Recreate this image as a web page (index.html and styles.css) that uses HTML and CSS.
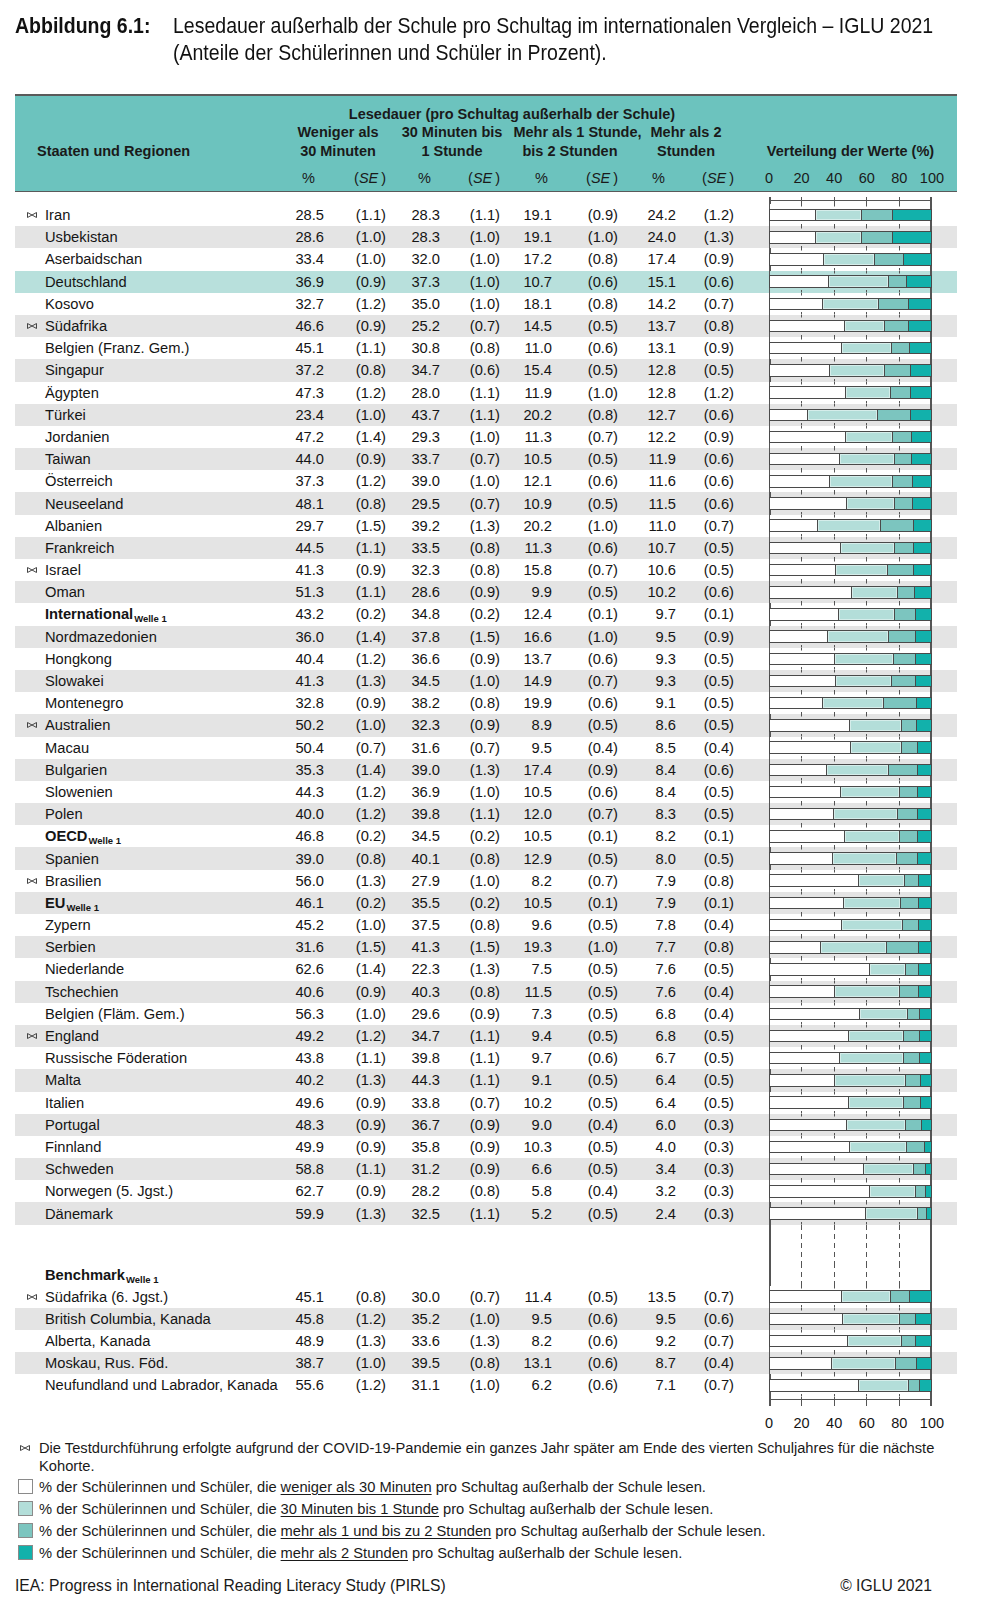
FILE: index.html
```html
<!DOCTYPE html>
<html lang="de">
<head>
<meta charset="utf-8">
<title>Abbildung 6.1</title>
<link rel="stylesheet" href="styles.css">
</head>
<body>
<div class="page">
  <div class="title">
    <div class="label"><span>Abbildung 6.1:</span></div>
    <div class="text"><span>Lesedauer außerhalb der Schule pro Schultag im internationalen Vergleich – IGLU 2021</span><span>(Anteile der Schülerinnen und Schüler in Prozent).</span></div>
  </div>

  <div class="head grid">
    <div class="h-states">Staaten und Regionen</div>
    <div class="h-title">Lesedauer (pro Schultag außerhalb der Schule)</div>
    <div class="h-grp g1"><span>Weniger als</span><span>30 Minuten</span></div>
    <div class="h-grp g2"><span>30 Minuten bis</span><span>1 Stunde</span></div>
    <div class="h-grp g3"><span class="shift">Mehr als 1 Stunde,</span><span>bis 2 Stunden</span></div>
    <div class="h-grp g4"><span>Mehr als 2</span><span>Stunden</span></div>
    <div class="h-dist">Verteilung der Werte (%)</div>
    <div class="h-pct c2">%</div><div class="h-se c3">(<i>SE</i>&#8201;)</div>
    <div class="h-pct c4">%</div><div class="h-se c5">(<i>SE</i>&#8201;)</div>
    <div class="h-pct c6">%</div><div class="h-se c7">(<i>SE</i>&#8201;)</div>
    <div class="h-pct c8">%</div><div class="h-se c9">(<i>SE</i>&#8201;)</div>
    <div class="h-axis"><span>0</span><span>20</span><span>40</span><span>60</span><span>80</span><span>100</span></div>
  </div>

  <div class="grid axis-top"><div class="chart"></div></div>

  <div class="row grid"><div class="name"><svg class="bt" viewBox="0 0 10 6"><path d="M.5.5 5 3 .5 5.5ZM9.5.5 5 3 9.5 5.5Z"/></svg>Iran</div><span>28.5</span><span>(1.1)</span><span>28.3</span><span>(1.1)</span><span>19.1</span><span>(0.9)</span><span>24.2</span><span>(1.2)</span><div class="chart"><div class="bar"><i class="s1" style="flex:28.5"></i><i class="s2" style="flex:28.3"></i><i class="s3" style="flex:19.1"></i><i class="s4" style="flex:24.2"></i></div></div></div>
  <div class="row grid alt"><div class="name">Usbekistan</div><span>28.6</span><span>(1.0)</span><span>28.3</span><span>(1.0)</span><span>19.1</span><span>(1.0)</span><span>24.0</span><span>(1.3)</span><div class="chart"><div class="bar"><i class="s1" style="flex:28.6"></i><i class="s2" style="flex:28.3"></i><i class="s3" style="flex:19.1"></i><i class="s4" style="flex:24.0"></i></div></div></div>
  <div class="row grid"><div class="name">Aserbaidschan</div><span>33.4</span><span>(1.0)</span><span>32.0</span><span>(1.0)</span><span>17.2</span><span>(0.8)</span><span>17.4</span><span>(0.9)</span><div class="chart"><div class="bar"><i class="s1" style="flex:33.4"></i><i class="s2" style="flex:32.0"></i><i class="s3" style="flex:17.2"></i><i class="s4" style="flex:17.4"></i></div></div></div>
  <div class="row grid de"><div class="name">Deutschland</div><span>36.9</span><span>(0.9)</span><span>37.3</span><span>(1.0)</span><span>10.7</span><span>(0.6)</span><span>15.1</span><span>(0.6)</span><div class="chart"><div class="bar"><i class="s1" style="flex:36.9"></i><i class="s2" style="flex:37.3"></i><i class="s3" style="flex:10.7"></i><i class="s4" style="flex:15.1"></i></div></div></div>
  <div class="row grid"><div class="name">Kosovo</div><span>32.7</span><span>(1.2)</span><span>35.0</span><span>(1.0)</span><span>18.1</span><span>(0.8)</span><span>14.2</span><span>(0.7)</span><div class="chart"><div class="bar"><i class="s1" style="flex:32.7"></i><i class="s2" style="flex:35.0"></i><i class="s3" style="flex:18.1"></i><i class="s4" style="flex:14.2"></i></div></div></div>
  <div class="row grid alt"><div class="name"><svg class="bt" viewBox="0 0 10 6"><path d="M.5.5 5 3 .5 5.5ZM9.5.5 5 3 9.5 5.5Z"/></svg>Südafrika</div><span>46.6</span><span>(0.9)</span><span>25.2</span><span>(0.7)</span><span>14.5</span><span>(0.5)</span><span>13.7</span><span>(0.8)</span><div class="chart"><div class="bar"><i class="s1" style="flex:46.6"></i><i class="s2" style="flex:25.2"></i><i class="s3" style="flex:14.5"></i><i class="s4" style="flex:13.7"></i></div></div></div>
  <div class="row grid"><div class="name">Belgien (Franz. Gem.)</div><span>45.1</span><span>(1.1)</span><span>30.8</span><span>(0.8)</span><span>11.0</span><span>(0.6)</span><span>13.1</span><span>(0.9)</span><div class="chart"><div class="bar"><i class="s1" style="flex:45.1"></i><i class="s2" style="flex:30.8"></i><i class="s3" style="flex:11.0"></i><i class="s4" style="flex:13.1"></i></div></div></div>
  <div class="row grid alt"><div class="name">Singapur</div><span>37.2</span><span>(0.8)</span><span>34.7</span><span>(0.6)</span><span>15.4</span><span>(0.5)</span><span>12.8</span><span>(0.5)</span><div class="chart"><div class="bar"><i class="s1" style="flex:37.2"></i><i class="s2" style="flex:34.7"></i><i class="s3" style="flex:15.4"></i><i class="s4" style="flex:12.8"></i></div></div></div>
  <div class="row grid"><div class="name">Ägypten</div><span>47.3</span><span>(1.2)</span><span>28.0</span><span>(1.1)</span><span>11.9</span><span>(1.0)</span><span>12.8</span><span>(1.2)</span><div class="chart"><div class="bar"><i class="s1" style="flex:47.3"></i><i class="s2" style="flex:28.0"></i><i class="s3" style="flex:11.9"></i><i class="s4" style="flex:12.8"></i></div></div></div>
  <div class="row grid alt"><div class="name">Türkei</div><span>23.4</span><span>(1.0)</span><span>43.7</span><span>(1.1)</span><span>20.2</span><span>(0.8)</span><span>12.7</span><span>(0.6)</span><div class="chart"><div class="bar"><i class="s1" style="flex:23.4"></i><i class="s2" style="flex:43.7"></i><i class="s3" style="flex:20.2"></i><i class="s4" style="flex:12.7"></i></div></div></div>
  <div class="row grid"><div class="name">Jordanien</div><span>47.2</span><span>(1.4)</span><span>29.3</span><span>(1.0)</span><span>11.3</span><span>(0.7)</span><span>12.2</span><span>(0.9)</span><div class="chart"><div class="bar"><i class="s1" style="flex:47.2"></i><i class="s2" style="flex:29.3"></i><i class="s3" style="flex:11.3"></i><i class="s4" style="flex:12.2"></i></div></div></div>
  <div class="row grid alt"><div class="name">Taiwan</div><span>44.0</span><span>(0.9)</span><span>33.7</span><span>(0.7)</span><span>10.5</span><span>(0.5)</span><span>11.9</span><span>(0.6)</span><div class="chart"><div class="bar"><i class="s1" style="flex:44.0"></i><i class="s2" style="flex:33.7"></i><i class="s3" style="flex:10.5"></i><i class="s4" style="flex:11.9"></i></div></div></div>
  <div class="row grid"><div class="name">Österreich</div><span>37.3</span><span>(1.2)</span><span>39.0</span><span>(1.0)</span><span>12.1</span><span>(0.6)</span><span>11.6</span><span>(0.6)</span><div class="chart"><div class="bar"><i class="s1" style="flex:37.3"></i><i class="s2" style="flex:39.0"></i><i class="s3" style="flex:12.1"></i><i class="s4" style="flex:11.6"></i></div></div></div>
  <div class="row grid alt"><div class="name">Neuseeland</div><span>48.1</span><span>(0.8)</span><span>29.5</span><span>(0.7)</span><span>10.9</span><span>(0.5)</span><span>11.5</span><span>(0.6)</span><div class="chart"><div class="bar"><i class="s1" style="flex:48.1"></i><i class="s2" style="flex:29.5"></i><i class="s3" style="flex:10.9"></i><i class="s4" style="flex:11.5"></i></div></div></div>
  <div class="row grid"><div class="name">Albanien</div><span>29.7</span><span>(1.5)</span><span>39.2</span><span>(1.3)</span><span>20.2</span><span>(1.0)</span><span>11.0</span><span>(0.7)</span><div class="chart"><div class="bar"><i class="s1" style="flex:29.7"></i><i class="s2" style="flex:39.2"></i><i class="s3" style="flex:20.2"></i><i class="s4" style="flex:11.0"></i></div></div></div>
  <div class="row grid alt"><div class="name">Frankreich</div><span>44.5</span><span>(1.1)</span><span>33.5</span><span>(0.8)</span><span>11.3</span><span>(0.6)</span><span>10.7</span><span>(0.5)</span><div class="chart"><div class="bar"><i class="s1" style="flex:44.5"></i><i class="s2" style="flex:33.5"></i><i class="s3" style="flex:11.3"></i><i class="s4" style="flex:10.7"></i></div></div></div>
  <div class="row grid"><div class="name"><svg class="bt" viewBox="0 0 10 6"><path d="M.5.5 5 3 .5 5.5ZM9.5.5 5 3 9.5 5.5Z"/></svg>Israel</div><span>41.3</span><span>(0.9)</span><span>32.3</span><span>(0.8)</span><span>15.8</span><span>(0.7)</span><span>10.6</span><span>(0.5)</span><div class="chart"><div class="bar"><i class="s1" style="flex:41.3"></i><i class="s2" style="flex:32.3"></i><i class="s3" style="flex:15.8"></i><i class="s4" style="flex:10.6"></i></div></div></div>
  <div class="row grid alt"><div class="name">Oman</div><span>51.3</span><span>(1.1)</span><span>28.6</span><span>(0.9)</span><span>9.9</span><span>(0.5)</span><span>10.2</span><span>(0.6)</span><div class="chart"><div class="bar"><i class="s1" style="flex:51.3"></i><i class="s2" style="flex:28.6"></i><i class="s3" style="flex:9.9"></i><i class="s4" style="flex:10.2"></i></div></div></div>
  <div class="row grid"><div class="name"><b>International<sub>Welle 1</sub></b></div><span>43.2</span><span>(0.2)</span><span>34.8</span><span>(0.2)</span><span>12.4</span><span>(0.1)</span><span>9.7</span><span>(0.1)</span><div class="chart"><div class="bar"><i class="s1" style="flex:43.2"></i><i class="s2" style="flex:34.8"></i><i class="s3" style="flex:12.4"></i><i class="s4" style="flex:9.7"></i></div></div></div>
  <div class="row grid alt"><div class="name">Nordmazedonien</div><span>36.0</span><span>(1.4)</span><span>37.8</span><span>(1.5)</span><span>16.6</span><span>(1.0)</span><span>9.5</span><span>(0.9)</span><div class="chart"><div class="bar"><i class="s1" style="flex:36.0"></i><i class="s2" style="flex:37.8"></i><i class="s3" style="flex:16.6"></i><i class="s4" style="flex:9.5"></i></div></div></div>
  <div class="row grid"><div class="name">Hongkong</div><span>40.4</span><span>(1.2)</span><span>36.6</span><span>(0.9)</span><span>13.7</span><span>(0.6)</span><span>9.3</span><span>(0.5)</span><div class="chart"><div class="bar"><i class="s1" style="flex:40.4"></i><i class="s2" style="flex:36.6"></i><i class="s3" style="flex:13.7"></i><i class="s4" style="flex:9.3"></i></div></div></div>
  <div class="row grid alt"><div class="name">Slowakei</div><span>41.3</span><span>(1.3)</span><span>34.5</span><span>(1.0)</span><span>14.9</span><span>(0.7)</span><span>9.3</span><span>(0.5)</span><div class="chart"><div class="bar"><i class="s1" style="flex:41.3"></i><i class="s2" style="flex:34.5"></i><i class="s3" style="flex:14.9"></i><i class="s4" style="flex:9.3"></i></div></div></div>
  <div class="row grid"><div class="name">Montenegro</div><span>32.8</span><span>(0.9)</span><span>38.2</span><span>(0.8)</span><span>19.9</span><span>(0.6)</span><span>9.1</span><span>(0.5)</span><div class="chart"><div class="bar"><i class="s1" style="flex:32.8"></i><i class="s2" style="flex:38.2"></i><i class="s3" style="flex:19.9"></i><i class="s4" style="flex:9.1"></i></div></div></div>
  <div class="row grid alt"><div class="name"><svg class="bt" viewBox="0 0 10 6"><path d="M.5.5 5 3 .5 5.5ZM9.5.5 5 3 9.5 5.5Z"/></svg>Australien</div><span>50.2</span><span>(1.0)</span><span>32.3</span><span>(0.9)</span><span>8.9</span><span>(0.5)</span><span>8.6</span><span>(0.5)</span><div class="chart"><div class="bar"><i class="s1" style="flex:50.2"></i><i class="s2" style="flex:32.3"></i><i class="s3" style="flex:8.9"></i><i class="s4" style="flex:8.6"></i></div></div></div>
  <div class="row grid"><div class="name">Macau</div><span>50.4</span><span>(0.7)</span><span>31.6</span><span>(0.7)</span><span>9.5</span><span>(0.4)</span><span>8.5</span><span>(0.4)</span><div class="chart"><div class="bar"><i class="s1" style="flex:50.4"></i><i class="s2" style="flex:31.6"></i><i class="s3" style="flex:9.5"></i><i class="s4" style="flex:8.5"></i></div></div></div>
  <div class="row grid alt"><div class="name">Bulgarien</div><span>35.3</span><span>(1.4)</span><span>39.0</span><span>(1.3)</span><span>17.4</span><span>(0.9)</span><span>8.4</span><span>(0.6)</span><div class="chart"><div class="bar"><i class="s1" style="flex:35.3"></i><i class="s2" style="flex:39.0"></i><i class="s3" style="flex:17.4"></i><i class="s4" style="flex:8.4"></i></div></div></div>
  <div class="row grid"><div class="name">Slowenien</div><span>44.3</span><span>(1.2)</span><span>36.9</span><span>(1.0)</span><span>10.5</span><span>(0.6)</span><span>8.4</span><span>(0.5)</span><div class="chart"><div class="bar"><i class="s1" style="flex:44.3"></i><i class="s2" style="flex:36.9"></i><i class="s3" style="flex:10.5"></i><i class="s4" style="flex:8.4"></i></div></div></div>
  <div class="row grid alt"><div class="name">Polen</div><span>40.0</span><span>(1.2)</span><span>39.8</span><span>(1.1)</span><span>12.0</span><span>(0.7)</span><span>8.3</span><span>(0.5)</span><div class="chart"><div class="bar"><i class="s1" style="flex:40.0"></i><i class="s2" style="flex:39.8"></i><i class="s3" style="flex:12.0"></i><i class="s4" style="flex:8.3"></i></div></div></div>
  <div class="row grid"><div class="name"><b>OECD<sub>Welle 1</sub></b></div><span>46.8</span><span>(0.2)</span><span>34.5</span><span>(0.2)</span><span>10.5</span><span>(0.1)</span><span>8.2</span><span>(0.1)</span><div class="chart"><div class="bar"><i class="s1" style="flex:46.8"></i><i class="s2" style="flex:34.5"></i><i class="s3" style="flex:10.5"></i><i class="s4" style="flex:8.2"></i></div></div></div>
  <div class="row grid alt"><div class="name">Spanien</div><span>39.0</span><span>(0.8)</span><span>40.1</span><span>(0.8)</span><span>12.9</span><span>(0.5)</span><span>8.0</span><span>(0.5)</span><div class="chart"><div class="bar"><i class="s1" style="flex:39.0"></i><i class="s2" style="flex:40.1"></i><i class="s3" style="flex:12.9"></i><i class="s4" style="flex:8.0"></i></div></div></div>
  <div class="row grid"><div class="name"><svg class="bt" viewBox="0 0 10 6"><path d="M.5.5 5 3 .5 5.5ZM9.5.5 5 3 9.5 5.5Z"/></svg>Brasilien</div><span>56.0</span><span>(1.3)</span><span>27.9</span><span>(1.0)</span><span>8.2</span><span>(0.7)</span><span>7.9</span><span>(0.8)</span><div class="chart"><div class="bar"><i class="s1" style="flex:56.0"></i><i class="s2" style="flex:27.9"></i><i class="s3" style="flex:8.2"></i><i class="s4" style="flex:7.9"></i></div></div></div>
  <div class="row grid alt"><div class="name"><b>EU<sub>Welle 1</sub></b></div><span>46.1</span><span>(0.2)</span><span>35.5</span><span>(0.2)</span><span>10.5</span><span>(0.1)</span><span>7.9</span><span>(0.1)</span><div class="chart"><div class="bar"><i class="s1" style="flex:46.1"></i><i class="s2" style="flex:35.5"></i><i class="s3" style="flex:10.5"></i><i class="s4" style="flex:7.9"></i></div></div></div>
  <div class="row grid"><div class="name">Zypern</div><span>45.2</span><span>(1.0)</span><span>37.5</span><span>(0.8)</span><span>9.6</span><span>(0.5)</span><span>7.8</span><span>(0.4)</span><div class="chart"><div class="bar"><i class="s1" style="flex:45.2"></i><i class="s2" style="flex:37.5"></i><i class="s3" style="flex:9.6"></i><i class="s4" style="flex:7.8"></i></div></div></div>
  <div class="row grid alt"><div class="name">Serbien</div><span>31.6</span><span>(1.5)</span><span>41.3</span><span>(1.5)</span><span>19.3</span><span>(1.0)</span><span>7.7</span><span>(0.8)</span><div class="chart"><div class="bar"><i class="s1" style="flex:31.6"></i><i class="s2" style="flex:41.3"></i><i class="s3" style="flex:19.3"></i><i class="s4" style="flex:7.7"></i></div></div></div>
  <div class="row grid"><div class="name">Niederlande</div><span>62.6</span><span>(1.4)</span><span>22.3</span><span>(1.3)</span><span>7.5</span><span>(0.5)</span><span>7.6</span><span>(0.5)</span><div class="chart"><div class="bar"><i class="s1" style="flex:62.6"></i><i class="s2" style="flex:22.3"></i><i class="s3" style="flex:7.5"></i><i class="s4" style="flex:7.6"></i></div></div></div>
  <div class="row grid alt"><div class="name">Tschechien</div><span>40.6</span><span>(0.9)</span><span>40.3</span><span>(0.8)</span><span>11.5</span><span>(0.5)</span><span>7.6</span><span>(0.4)</span><div class="chart"><div class="bar"><i class="s1" style="flex:40.6"></i><i class="s2" style="flex:40.3"></i><i class="s3" style="flex:11.5"></i><i class="s4" style="flex:7.6"></i></div></div></div>
  <div class="row grid"><div class="name">Belgien (Fläm. Gem.)</div><span>56.3</span><span>(1.0)</span><span>29.6</span><span>(0.9)</span><span>7.3</span><span>(0.5)</span><span>6.8</span><span>(0.4)</span><div class="chart"><div class="bar"><i class="s1" style="flex:56.3"></i><i class="s2" style="flex:29.6"></i><i class="s3" style="flex:7.3"></i><i class="s4" style="flex:6.8"></i></div></div></div>
  <div class="row grid alt"><div class="name"><svg class="bt" viewBox="0 0 10 6"><path d="M.5.5 5 3 .5 5.5ZM9.5.5 5 3 9.5 5.5Z"/></svg>England</div><span>49.2</span><span>(1.2)</span><span>34.7</span><span>(1.1)</span><span>9.4</span><span>(0.5)</span><span>6.8</span><span>(0.5)</span><div class="chart"><div class="bar"><i class="s1" style="flex:49.2"></i><i class="s2" style="flex:34.7"></i><i class="s3" style="flex:9.4"></i><i class="s4" style="flex:6.8"></i></div></div></div>
  <div class="row grid"><div class="name">Russische Föderation</div><span>43.8</span><span>(1.1)</span><span>39.8</span><span>(1.1)</span><span>9.7</span><span>(0.6)</span><span>6.7</span><span>(0.5)</span><div class="chart"><div class="bar"><i class="s1" style="flex:43.8"></i><i class="s2" style="flex:39.8"></i><i class="s3" style="flex:9.7"></i><i class="s4" style="flex:6.7"></i></div></div></div>
  <div class="row grid alt"><div class="name">Malta</div><span>40.2</span><span>(1.3)</span><span>44.3</span><span>(1.1)</span><span>9.1</span><span>(0.5)</span><span>6.4</span><span>(0.5)</span><div class="chart"><div class="bar"><i class="s1" style="flex:40.2"></i><i class="s2" style="flex:44.3"></i><i class="s3" style="flex:9.1"></i><i class="s4" style="flex:6.4"></i></div></div></div>
  <div class="row grid"><div class="name">Italien</div><span>49.6</span><span>(0.9)</span><span>33.8</span><span>(0.7)</span><span>10.2</span><span>(0.5)</span><span>6.4</span><span>(0.5)</span><div class="chart"><div class="bar"><i class="s1" style="flex:49.6"></i><i class="s2" style="flex:33.8"></i><i class="s3" style="flex:10.2"></i><i class="s4" style="flex:6.4"></i></div></div></div>
  <div class="row grid alt"><div class="name">Portugal</div><span>48.3</span><span>(0.9)</span><span>36.7</span><span>(0.9)</span><span>9.0</span><span>(0.4)</span><span>6.0</span><span>(0.3)</span><div class="chart"><div class="bar"><i class="s1" style="flex:48.3"></i><i class="s2" style="flex:36.7"></i><i class="s3" style="flex:9.0"></i><i class="s4" style="flex:6.0"></i></div></div></div>
  <div class="row grid"><div class="name">Finnland</div><span>49.9</span><span>(0.9)</span><span>35.8</span><span>(0.9)</span><span>10.3</span><span>(0.5)</span><span>4.0</span><span>(0.3)</span><div class="chart"><div class="bar"><i class="s1" style="flex:49.9"></i><i class="s2" style="flex:35.8"></i><i class="s3" style="flex:10.3"></i><i class="s4" style="flex:4.0"></i></div></div></div>
  <div class="row grid alt"><div class="name">Schweden</div><span>58.8</span><span>(1.1)</span><span>31.2</span><span>(0.9)</span><span>6.6</span><span>(0.5)</span><span>3.4</span><span>(0.3)</span><div class="chart"><div class="bar"><i class="s1" style="flex:58.8"></i><i class="s2" style="flex:31.2"></i><i class="s3" style="flex:6.6"></i><i class="s4" style="flex:3.4"></i></div></div></div>
  <div class="row grid"><div class="name">Norwegen (5. Jgst.)</div><span>62.7</span><span>(0.9)</span><span>28.2</span><span>(0.8)</span><span>5.8</span><span>(0.4)</span><span>3.2</span><span>(0.3)</span><div class="chart"><div class="bar"><i class="s1" style="flex:62.7"></i><i class="s2" style="flex:28.2"></i><i class="s3" style="flex:5.8"></i><i class="s4" style="flex:3.2"></i></div></div></div>
  <div class="row grid alt"><div class="name">Dänemark</div><span>59.9</span><span>(1.3)</span><span>32.5</span><span>(1.1)</span><span>5.2</span><span>(0.5)</span><span>2.4</span><span>(0.3)</span><div class="chart"><div class="bar"><i class="s1" style="flex:59.9"></i><i class="s2" style="flex:32.5"></i><i class="s3" style="flex:5.2"></i><i class="s4" style="flex:2.4"></i></div></div></div>

  <div class="grid spacer"><div class="chart dash"></div></div>

  <div class="row grid"><div class="name"><b>Benchmark<sub>Welle 1</sub></b></div><div class="chart dash"></div></div>
  <div class="row grid"><div class="name"><svg class="bt" viewBox="0 0 10 6"><path d="M.5.5 5 3 .5 5.5ZM9.5.5 5 3 9.5 5.5Z"/></svg>Südafrika (6. Jgst.)</div><span>45.1</span><span>(0.8)</span><span>30.0</span><span>(0.7)</span><span>11.4</span><span>(0.5)</span><span>13.5</span><span>(0.7)</span><div class="chart"><div class="bar"><i class="s1" style="flex:45.1"></i><i class="s2" style="flex:30.0"></i><i class="s3" style="flex:11.4"></i><i class="s4" style="flex:13.5"></i></div></div></div>
  <div class="row grid alt"><div class="name">British Columbia, Kanada</div><span>45.8</span><span>(1.2)</span><span>35.2</span><span>(1.0)</span><span>9.5</span><span>(0.6)</span><span>9.5</span><span>(0.6)</span><div class="chart"><div class="bar"><i class="s1" style="flex:45.8"></i><i class="s2" style="flex:35.2"></i><i class="s3" style="flex:9.5"></i><i class="s4" style="flex:9.5"></i></div></div></div>
  <div class="row grid"><div class="name">Alberta, Kanada</div><span>48.9</span><span>(1.3)</span><span>33.6</span><span>(1.3)</span><span>8.2</span><span>(0.6)</span><span>9.2</span><span>(0.7)</span><div class="chart"><div class="bar"><i class="s1" style="flex:48.9"></i><i class="s2" style="flex:33.6"></i><i class="s3" style="flex:8.2"></i><i class="s4" style="flex:9.2"></i></div></div></div>
  <div class="row grid alt"><div class="name">Moskau, Rus. Föd.</div><span>38.7</span><span>(1.0)</span><span>39.5</span><span>(0.8)</span><span>13.1</span><span>(0.6)</span><span>8.7</span><span>(0.4)</span><div class="chart"><div class="bar"><i class="s1" style="flex:38.7"></i><i class="s2" style="flex:39.5"></i><i class="s3" style="flex:13.1"></i><i class="s4" style="flex:8.7"></i></div></div></div>
  <div class="row grid"><div class="name">Neufundland und Labrador, Kanada</div><span>55.6</span><span>(1.2)</span><span>31.1</span><span>(1.0)</span><span>6.2</span><span>(0.6)</span><span>7.1</span><span>(0.7)</span><div class="chart"><div class="bar"><i class="s1" style="flex:55.6"></i><i class="s2" style="flex:31.1"></i><i class="s3" style="flex:6.2"></i><i class="s4" style="flex:7.1"></i></div></div></div>

  <div class="grid axis-bottom"><div class="chart"></div></div>
  <div class="grid axis-labels"><div class="h-axis"><span>0</span><span>20</span><span>40</span><span>60</span><span>80</span><span>100</span></div></div>

  <div class="notes">
    <div class="note"><svg class="bt" viewBox="0 0 10 6"><path d="M.5.5 5 3 .5 5.5ZM9.5.5 5 3 9.5 5.5Z"/></svg><p>Die Testdurchführung erfolgte aufgrund der COVID-19-Pandemie ein ganzes Jahr später am Ende des vierten Schuljahres für die nächste Kohorte.</p></div>
    <div class="leg"><span class="sw s1"></span>% der Schülerinnen und Schüler, die <u>weniger als 30 Minuten</u> pro Schultag außerhalb der Schule lesen.</div>
    <div class="leg"><span class="sw s2"></span>% der Schülerinnen und Schüler, die <u>30 Minuten bis 1 Stunde</u> pro Schultag außerhalb der Schule lesen.</div>
    <div class="leg"><span class="sw s3"></span>% der Schülerinnen und Schüler, die <u>mehr als 1 und bis zu 2 Stunden</u> pro Schultag außerhalb der Schule lesen.</div>
    <div class="leg"><span class="sw s4"></span>% der Schülerinnen und Schüler, die <u>mehr als 2 Stunden</u> pro Schultag außerhalb der Schule lesen.</div>
  </div>

  <div class="footer"><span>IEA: Progress in International Reading Literacy Study (PIRLS)</span><span>© IGLU 2021</span></div>
</div>
</body>
</html>
```

FILE: styles.css
```css
* { box-sizing: border-box; }

:root {
  --line: #555;
  --ticks: linear-gradient(90deg,
    transparent calc(20% - .5px), var(--line) calc(20% - .5px) calc(20% + .5px),
    transparent calc(20% + .5px) calc(40% - .5px), var(--line) calc(40% - .5px) calc(40% + .5px),
    transparent calc(40% + .5px) calc(60% - .5px), var(--line) calc(60% - .5px) calc(60% + .5px),
    transparent calc(60% + .5px) calc(80% - .5px), var(--line) calc(80% - .5px) calc(80% + .5px),
    transparent calc(80% + .5px));
  --frame: linear-gradient(90deg, var(--line) 0 1.5px, transparent 1.5px calc(100% - 1.5px), var(--line) calc(100% - 1.5px));
}

body {
  margin: 0;
  background: #fff;
  color: #151515;
  font-family: "Liberation Sans", Arial, sans-serif;
}

.page {
  width: 942px;
  margin-left: 15px;
}

/* Title (condensed look: Arial metrics squeezed horizontally) */
.title {
  display: flex;
  height: 94px;
  padding-top: 13px;
  font-size: 22.5px;
  line-height: 26.5px;
  color: #111;
  overflow: hidden;
}
.title .label { width: 158px; flex: none; font-weight: bold; }
.title .text { flex: 1; min-width: 0; }
.title span {
  display: block;
  white-space: nowrap;
  transform: scaleX(.867);
  transform-origin: 0 50%;
}

/* Shared column grid */
.grid {
  display: grid;
  grid-template-columns: 275px 34px 62px 54px 60px 52px 66px 58px 58px 35px 163px 25px;
}

/* Header band */
.head {
  background: #6cc3be;
  border-top: 2px solid #5a5a5a;
  border-bottom: 1.5px solid #5a5a5a;
  padding: 9px 0 4px;
  grid-template-rows: 18px 18px 19px 9px 18px;
  font-size: 14.5px;
  line-height: 18px;
  color: #1a1a1a;
}
.h-states { grid-column: 1; grid-row: 3; padding-left: 22px; font-weight: bold; line-height: 21px; }
.h-title { grid-column: 2 / 10; grid-row: 1; text-align: center; font-weight: bold; }
.h-grp {
  grid-row: 2 / 4;
  display: flex;
  flex-direction: column;
  align-items: center;
  font-weight: bold;
  line-height: 18.5px;
  white-space: nowrap;
}
.g1 { grid-column: 2 / 4; }
.g2 { grid-column: 4 / 6; padding-left: 18px; }
.g3 { grid-column: 6 / 8; padding-left: 22px; }
.g3 .shift { margin-left: 15px; }
.g4 { grid-column: 8 / 10; padding-left: 20px; }
.h-dist { grid-column: 11; grid-row: 3; display: flex; justify-content: center; white-space: nowrap; font-weight: bold; line-height: 21px; }
.h-pct, .h-se { grid-row: 5; text-align: right; }
.h-pct { padding-right: 9px; }
.c2 { grid-column: 2; } .c3 { grid-column: 3; } .c4 { grid-column: 4; } .c5 { grid-column: 5; }
.c6 { grid-column: 6; padding-right: 4px; } .c7 { grid-column: 7; } .c8 { grid-column: 8; padding-right: 11px; } .c9 { grid-column: 9; }

.h-axis {
  grid-column: 11;
  grid-row: 5;
  display: flex;
  margin: 0 -16.3px;
}
.h-axis span { flex: 1; text-align: center; }

/* Axes */
.axis-top { height: 12px; }
.axis-top .chart {
  grid-column: 11;
  background:
    var(--frame) 0 5px / 100% 7px no-repeat,
    var(--ticks) 0 5px / 100% 7px no-repeat,
    linear-gradient(var(--line), var(--line)) 0 8px / 100% 1px no-repeat;
}
.axis-bottom { height: 9px; }
.axis-bottom .chart {
  grid-column: 11;
  background:
    var(--frame),
    var(--ticks),
    linear-gradient(var(--line), var(--line)) 0 2.5px / 100% 1px no-repeat;
}
.axis-labels { height: 20px; margin-top: 7px; font-size: 14.5px; line-height: 20px; }
.axis-labels .h-axis { grid-row: 1; }

/* Data rows */
.row {
  height: 22.2px;
  font-size: 14.7px;
  align-items: center;
  background: #fff;
}
.row.alt { background: #e4e4e4; }
.row.de { background: #b8e0dc; }
.row > span { text-align: right; white-space: nowrap; }

.name {
  padding-left: 30px;
  white-space: nowrap;
  display: flex;
  align-items: center;
}
.name b { font-weight: bold; }
sub {
  font-size: 9.5px;
  font-weight: bold;
  vertical-align: -3px;
  margin-left: 1px;
  line-height: 0;
}

.bt {
  width: 10px;
  height: 6px;
  flex: none;
  margin-left: -18px;
  margin-right: 8px;
  fill: none;
  stroke: #444;
  stroke-width: 1;
}

.chart {
  grid-column: 11;
  align-self: stretch;
  display: flex;
  align-items: center;
  background:
    var(--frame),
    var(--ticks) 0 0 / 100% 2.5px no-repeat,
    var(--ticks) 0 100% / 100% 2.5px no-repeat;
}
.bar {
  flex: 1;
  display: flex;
  height: 12.5px;
  border: 1px solid #4a4a4a;
  background: #fff;
}
.bar i { display: block; height: 100%; min-width: 0; }
.bar i + i { border-left: 1px solid #4a4a4a; }
.s1 { background: #fff; }
.s2 { background: #b3ded9; box-shadow: inset 0 0 0 1px rgba(255,255,255,.45); }
.s3 { background: #7cc5bf; }
.s4 { background: #12b1ab; }

.spacer { height: 38.8px; }
.chart.dash { position: relative; background: var(--frame); }
.chart.dash::before {
  content: "";
  position: absolute;
  inset: 0;
  background: var(--ticks);
  -webkit-mask-image: repeating-linear-gradient(#000 0 5px, transparent 5px 9px);
  mask-image: repeating-linear-gradient(#000 0 5px, transparent 5px 9px);
}

/* Notes & legend */
.notes {
  margin-top: 6px;
  font-size: 14.7px;
  color: #1a1a1a;
}
.note {
  display: flex;
  align-items: flex-start;
  padding-left: 23px;
  line-height: 18.5px;
}
.note .bt { margin: 6.5px 9px 0 -18px; }
.note p { margin: 0; flex: 1; }
.leg {
  display: flex;
  align-items: center;
  height: 22px;
  padding-left: 3px;
  white-space: nowrap;
}
.leg u { text-decoration-thickness: 1px; text-underline-offset: 2px; margin: 0 4px; }
.sw {
  width: 15px;
  height: 15px;
  border: 1.5px solid #8a8a8a;
  margin-right: 6px;
  flex: none;
}
.sw.s2 { box-shadow: none; }

.footer {
  display: flex;
  justify-content: space-between;
  margin-top: 12px;
  padding-right: 25px;
  font-size: 15.7px;
  line-height: 20px;
  color: #1a1a1a;
}
```
